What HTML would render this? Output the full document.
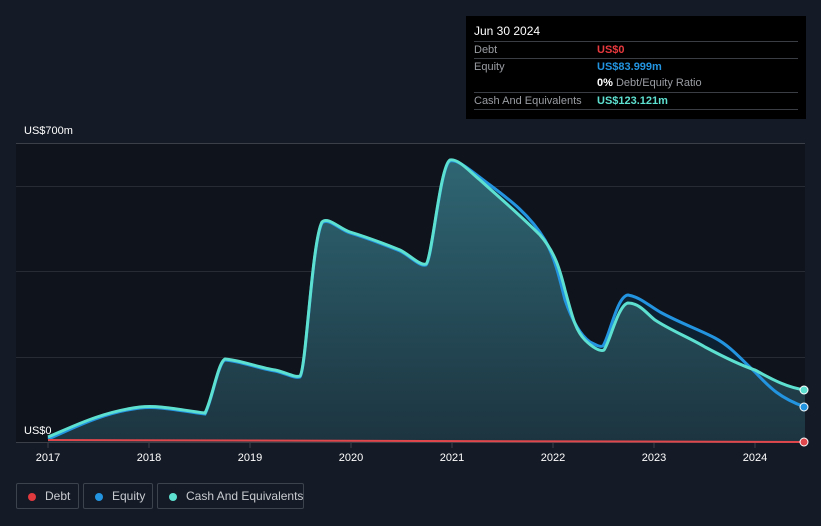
<!DOCTYPE html>
<html><head><meta charset="utf-8"><style>
html,body{margin:0;padding:0;background:#151b26;width:821px;height:526px;overflow:hidden;font-family:"Liberation Sans",sans-serif}
.tip{position:absolute;left:466px;top:16px;width:340px;height:103px;background:#000;}
.tip .d{position:absolute;left:8px;top:8px;color:#fff;font-size:12px}
.row{position:absolute;left:8px;width:324px;border-top:1px solid #3a3d44;height:17px;font-size:11px;color:#9a9da3;white-space:nowrap}
.row span{position:absolute;left:0;top:2px}
.row b{position:absolute;left:123px;top:2px;font-weight:bold}
.leg{position:absolute;top:483px;height:26px;border:1px solid #3d434d;border-radius:2px;box-sizing:border-box;color:#c8cbd0;font-size:12px;white-space:nowrap}
.leg i{position:absolute;left:11px;top:9px;width:8px;height:8px;border-radius:50%}
.leg span{position:absolute;left:28px;top:5px}
.lab{position:absolute;color:#fff;font-size:11px}
</style></head><body>
<svg width="821" height="526" style="position:absolute;left:0;top:0">
<defs><linearGradient id="g" x1="0" y1="0" x2="0" y2="1"><stop offset="0" stop-color="#2f6673"/><stop offset="1" stop-color="#1c3440"/></linearGradient></defs>
<rect x="16" y="143" width="789" height="300" fill="#0f131b"/>
<g stroke="#262b34" stroke-width="1">
<line x1="16" y1="186.5" x2="805" y2="186.5"/><line x1="16" y1="271.5" x2="805" y2="271.5"/><line x1="16" y1="357.5" x2="805" y2="357.5"/>
</g>
<line x1="16" y1="143.5" x2="805" y2="143.5" stroke="#3a3f48"/>
<line x1="16" y1="442.5" x2="805" y2="442.5" stroke="#3a3f48"/>
<path d="M48,437 C70,428 100,412 140,407 C160,405 180,410 205,413 C212,400 218,362 225,359 C240,360 260,368 275,370 C285,372 295,378 300,376 C306,370 312,240 322,222 C328,216 340,229 350,232 C370,238 385,244 400,250 C410,255 420,266 426,264 C432,260 440,165 450,160 C458,158 470,170 490,185 C510,200 530,215 545,240 C555,258 560,280 565,300 C572,320 580,335 590,342 C598,346 600,347 603,346 C610,335 617,296 628,295 C640,297 648,305 660,312 C680,323 700,330 715,338 C730,346 740,358 755,372 C770,388 780,398 805,407 L805,442 L48,442 Z" fill="#0c2233"/>
<path d="M48,437 C70,428 100,412 140,407 C160,405 180,410 205,413 C212,400 218,362 225,359 C240,360 260,368 275,370 C285,372 295,378 300,376 C306,370 312,240 322,222 C328,216 340,229 350,232 C370,238 385,244 400,250 C410,255 420,266 426,264 C432,260 440,165 450,160 C458,158 470,172 480,180 C500,198 520,215 540,235 C555,252 560,270 565,290 C572,315 575,330 585,340 C592,347 600,352 604,350 C610,342 618,305 628,303 C640,303 648,315 655,320 C670,330 690,338 705,347 C720,355 740,365 755,370 C770,378 785,387 805,390 L805,442 L48,442 Z" fill="url(#g)"/>
<path d="M48,439 C70,430 100,413 140,408 C160,406 180,411 205,414 C212,401 218,363 225,360 C240,361 260,369 275,371 C285,373 295,379 300,377 C306,371 312,241 322,223 C328,217 340,230 350,233 C370,239 385,245 400,251 C410,256 420,267 426,265 C432,261 440,166 450,161 C458,159 470,170 490,185 C510,200 530,215 545,240 C555,258 560,280 565,300 C572,320 580,335 590,342 C598,346 600,347 603,346 C610,335 617,296 628,295 C640,297 648,305 660,312 C680,323 700,330 715,338 C730,346 740,358 755,372 C770,388 780,398 805,407" fill="none" stroke="#2394e0" stroke-width="3"/>
<path d="M48,437 C70,428 100,412 140,407 C160,405 180,410 205,413 C212,400 218,362 225,359 C240,360 260,368 275,370 C285,372 295,378 300,376 C306,370 312,240 322,222 C328,216 340,229 350,232 C370,238 385,244 400,250 C410,255 420,266 426,264 C432,260 440,165 450,160 C458,158 470,172 480,180 C500,198 520,215 540,235 C555,252 560,270 565,290 C572,315 575,330 585,340 C592,347 600,352 604,350 C610,342 618,305 628,303 C640,303 648,315 655,320 C670,330 690,338 705,347 C720,355 740,365 755,370 C770,378 785,387 805,390" fill="none" stroke="#5ee0d0" stroke-width="3"/>
<path d="M48,440 C100,441 200,442 805,442" fill="none" stroke="#e0474c" stroke-width="2"/>
<circle cx="804" cy="390" r="4" fill="#5ee0d0" stroke="#fff" stroke-width="1"/>
<circle cx="804" cy="407" r="4" fill="#2394e0" stroke="#fff" stroke-width="1"/>
<circle cx="804" cy="442" r="4" fill="#e0474c" stroke="#fff" stroke-width="1"/>
<g stroke="#3a3f48"><line x1="48" y1="443" x2="48" y2="448"/><line x1="149" y1="443" x2="149" y2="448"/><line x1="250" y1="443" x2="250" y2="448"/><line x1="351" y1="443" x2="351" y2="448"/><line x1="452" y1="443" x2="452" y2="448"/><line x1="553" y1="443" x2="553" y2="448"/><line x1="654" y1="443" x2="654" y2="448"/><line x1="755" y1="443" x2="755" y2="448"/></g>
<g fill="#fff" font-size="11" text-anchor="middle" font-family="Liberation Sans, sans-serif">
<text x="48" y="461">2017</text><text x="149" y="461">2018</text><text x="250" y="461">2019</text><text x="351" y="461">2020</text><text x="452" y="461">2021</text><text x="553" y="461">2022</text><text x="654" y="461">2023</text><text x="755" y="461">2024</text>
</g>
</svg>
<div class="lab" style="left:24px;top:125px">US$700m</div>
<div class="lab" style="left:24px;top:425px">US$0</div>
<div class="tip">
<div class="d">Jun 30 2024</div>
<div class="row" style="top:25px"><span>Debt</span><b style="color:#e8393e">US$0</b></div>
<div class="row" style="top:42px"><span>Equity</span><b style="color:#2394e0">US$83.999m</b></div>
<div class="row" style="top:59px;border-top:none"><b style="color:#fff">0% <span style="position:static;color:#9a9da3;font-weight:normal">Debt/Equity Ratio</span></b></div>
<div class="row" style="top:76px"><span>Cash And Equivalents</span><b style="color:#5ee0d0">US$123.121m</b></div>
<div class="row" style="top:93px;height:0"></div>
</div>
<div class="leg" style="left:16px;width:63px"><i style="background:#e0393e"></i><span>Debt</span></div>
<div class="leg" style="left:83px;width:70px"><i style="background:#2394e0"></i><span>Equity</span></div>
<div class="leg" style="left:157px;width:147px"><i style="background:#5ee0d0"></i><span>Cash And Equivalents</span></div>
</body></html>
